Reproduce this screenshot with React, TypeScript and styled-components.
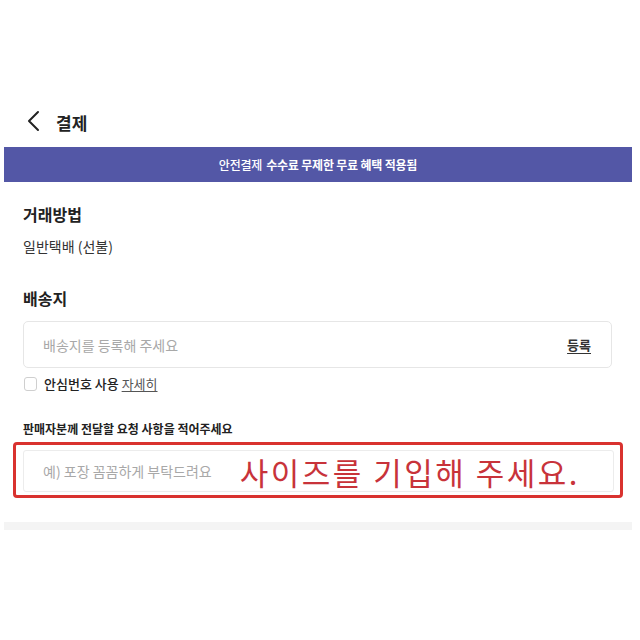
import React from "react";
import styled, { createGlobalStyle } from "styled-components";

const Global = createGlobalStyle`
  html, body { margin: 0; padding: 0; background: #fff; }
  body { font-family: "Noto Sans CJK KR", "Noto Sans", sans-serif; color: #222; }
  * { box-sizing: border-box; }
`;

const Page = styled.div`
  width: 640px;
  height: 640px;
  padding-top: 100px;
  background: #fff;
`;

const Column = styled.div`
  margin-left: 4px;
  width: 628px;
  display: flex;
  flex-direction: column;
`;

const Header = styled.div`
  height: 42px;
  display: flex;
  align-items: center;
  gap: 14px;
  padding-left: 22px;
`;

const Title = styled.div`
  font-size: 17px;
  font-weight: 700;
  color: #222;
  line-height: 1;
  margin-top: 2px;
`;

const Banner = styled.div`
  margin-top: 5px;
  height: 35px;
  background: #5357a6;
  color: #fff;
  font-size: 12px;
  font-weight: 700;
  display: flex;
  align-items: center;
  justify-content: center;
  gap: 4px;
  letter-spacing: -0.2px;
`;

const Light = styled.span`
  font-weight: 500;
`;

const Body = styled.div`
  padding: 21px 20px 0 19px;
  display: flex;
  flex-direction: column;
`;

const SectionTitle = styled.div<{ $top?: number }>`
  font-size: 16px;
  font-weight: 700;
  color: #222;
  line-height: 22px;
  margin-top: ${(p) => p.$top ?? 0}px;
`;

const Plain = styled.div`
  font-size: 14px;
  color: #333;
  line-height: 18px;
  margin-top: 12px;
`;

const AddressBox = styled.div`
  margin-top: 12px;
  height: 47px;
  border: 1px solid #e6e6e6;
  border-radius: 5px;
  display: flex;
  align-items: center;
  justify-content: space-between;
  padding: 0 20px 0 19px;
`;

const Placeholder = styled.span`
  font-size: 14px;
  color: #a8a8a8;
`;

const Register = styled.span`
  font-size: 13px;
  font-weight: 700;
  color: #333;
  text-decoration: underline;
  text-underline-offset: 3px;
`;

const CheckRow = styled.label`
  margin-top: 6px;
  display: flex;
  align-items: center;
  gap: 7px;
  font-size: 13px;
  color: #222;
  font-weight: 500;
`;

const CheckBox = styled.span`
  width: 13px;
  height: 14px;
  border: 1px solid #cfcfcf;
  border-radius: 3px;
  margin-left: 1px;
`;

const Detail = styled.span`
  color: #555;
  font-weight: 400;
  text-decoration: underline;
  text-underline-offset: 2px;
`;

const RequestLabel = styled.div`
  margin-top: 29px;
  font-size: 12px;
  font-weight: 700;
  color: #222;
  line-height: 14px;
`;

const Highlight = styled.div`
  margin: 6px -11px 0 -10px;
  height: 56px;
  border: 3px solid #d9322f;
  border-radius: 4px;
  padding: 5px 6px 3px 7px;
`;

const RequestInput = styled.div`
  height: 100%;
  border: 1px solid #ececec;
  border-radius: 3px;
  display: flex;
  align-items: center;
  padding-left: 19px;
`;

const Annotation = styled.span`
  margin-left: 28px;
  font-size: 31px;
  color: #c8333a;
  letter-spacing: 2.5px;
  line-height: 1;
`;

const Divider = styled.div`
  margin-top: 24px;
  height: 8px;
  background: #f4f4f4;
`;

export default function App() {
  return (
    <Page>
      <Global />
      <Column>
        <Header>
          <svg width="16" height="22" viewBox="0 0 16 22" fill="none">
            <path d="M12 2 L3 11 L12 20" stroke="#222" strokeWidth="2" strokeLinecap="round" strokeLinejoin="round" />
          </svg>
          <Title>결제</Title>
        </Header>
        <Banner>
          <Light>안전결제</Light>
          <span>수수료 무제한 무료 혜택 적용됨</span>
        </Banner>
        <Body>
          <SectionTitle>거래방법</SectionTitle>
          <Plain>일반택배 (선불)</Plain>
          <SectionTitle $top={32}>배송지</SectionTitle>
          <AddressBox>
            <Placeholder>배송지를 등록해 주세요</Placeholder>
            <Register>등록</Register>
          </AddressBox>
          <CheckRow>
            <CheckBox />
            <span>
              안심번호 사용 <Detail>자세히</Detail>
            </span>
          </CheckRow>
          <RequestLabel>판매자분께 전달할 요청 사항을 적어주세요</RequestLabel>
          <Highlight>
            <RequestInput>
              <Placeholder>예) 포장 꼼꼼하게 부탁드려요</Placeholder>
              <Annotation>사이즈를 기입해 주세요.</Annotation>
            </RequestInput>
          </Highlight>
        </Body>
        <Divider />
      </Column>
    </Page>
  );
}
